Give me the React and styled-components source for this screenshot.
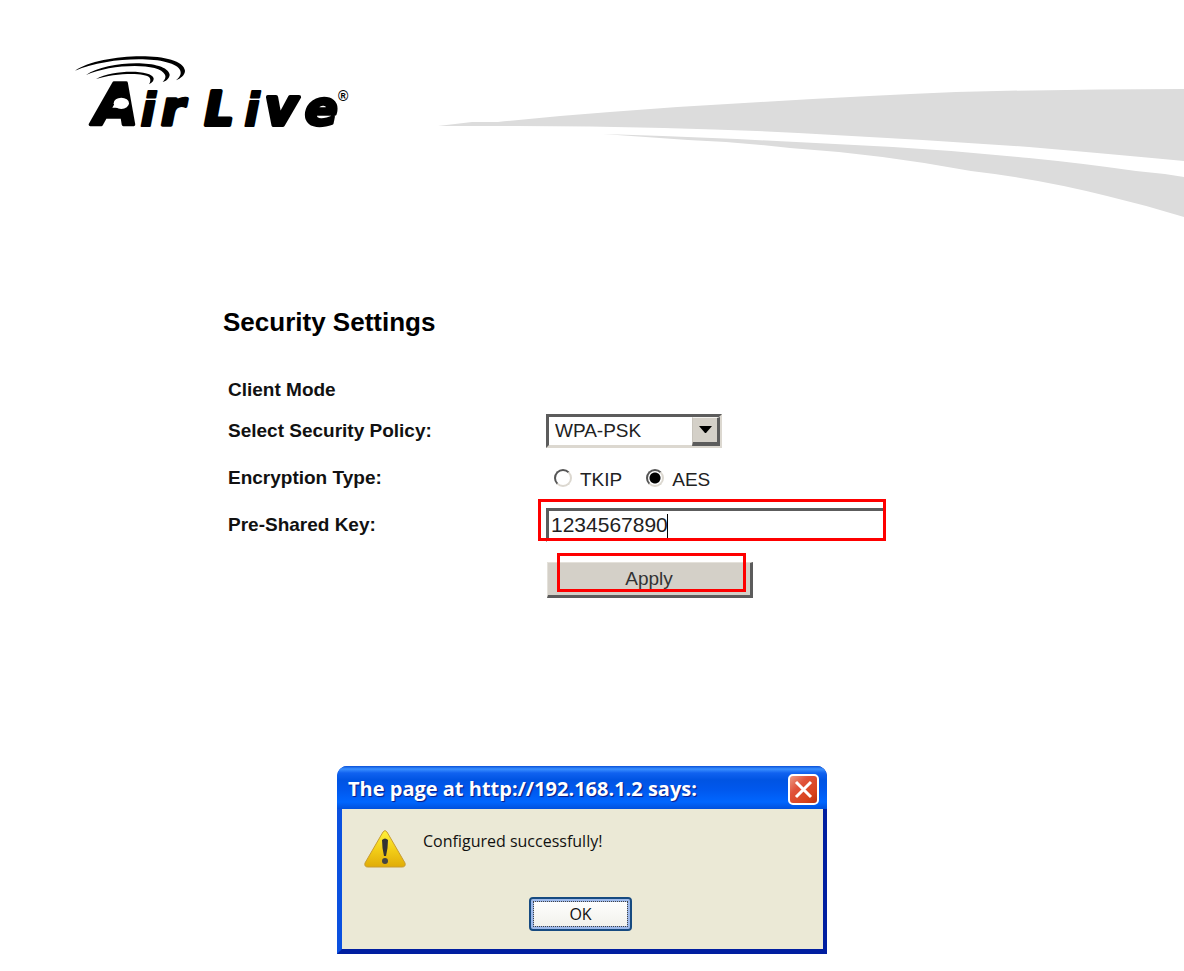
import React, { useState } from "react";
import styled, { createGlobalStyle } from "styled-components";

const GlobalStyle = createGlobalStyle`
  *, *::before, *::after { box-sizing: border-box; }
  body {
    margin: 0;
    background: #fff;
    color: #111;
    font-family: "Liberation Sans", Arial, sans-serif;
  }
`;

const Page = styled.div`
  display: flex;
  flex-direction: column;
  min-height: 100vh;
  overflow-x: hidden;
`;

const Header = styled.header`
  display: flex;
  align-items: flex-start;
  gap: 66px;
  padding: 40px 0 0 60px;
`;

const LogoArt = styled.svg`
  flex: none;
  width: 310px;
  height: 110px;
`;

const LogoWord = styled.text`
  font-family: "DejaVu Sans", sans-serif;
  font-weight: 700;
  font-style: italic;
  fill: #000;
  stroke: #000;
  stroke-linejoin: round;
  stroke-width: ${(p) => p.$weight}px;
  font-size: ${(p) => p.$size}px;
`;

const Mark = styled.text`
  font-family: "Liberation Sans", sans-serif;
  font-weight: 700;
  font-size: 42px;
`;

const Swoosh = styled.svg`
  flex: 1;
  min-width: 0;
  height: 130px;
  margin-top: 48px;
  fill: #dcdcdc;
`;

const Settings = styled.form`
  display: flex;
  flex-direction: column;
  align-items: flex-start;
  padding: 88px 24px 0 223px;
`;

const Title = styled.h1`
  margin: 0 0 38px;
  font-size: 26px;
  line-height: 32px;
  font-weight: 700;
  color: #000;
`;

const Rows = styled.div`
  display: grid;
  grid-template-columns: 318px auto;
  grid-template-rows: 47px 48px 46px;
  align-items: center;
  padding-left: 5px;
`;

const Subtitle = styled.h2`
  margin: 0 0 3px 5px;
  font-size: 19px;
  line-height: 28px;
  font-weight: 700;
`;

const Label = styled.label`
  font-size: 19px;
  line-height: 24px;
  font-weight: 700;
`;

const SelectBox = styled.div`
  position: relative;
  width: 176px;
  height: 34px;
`;

const Select = styled.select`
  appearance: none;
  width: 100%;
  height: 100%;
  padding: 0 28px 0 6px;
  border: 3px solid;
  border-color: #5c5c5c #dcd8d0 #dcd8d0 #5c5c5c;
  border-radius: 0;
  background: #fff;
  color: #222;
  font-family: inherit;
  font-size: 19px;
`;

const Arrow = styled.span`
  position: absolute;
  top: 3px;
  right: 2px;
  display: flex;
  align-items: center;
  justify-content: center;
  width: 28px;
  height: 29px;
  border: solid;
  border-width: 1px 3px 4px 1px;
  border-color: #f4f2ee #5c5c5c #5c5c5c #c8c4bc;
  background: #d4d0c8;
  pointer-events: none;
`;

const Options = styled.div`
  display: flex;
  align-items: center;
  gap: 24px;
  padding: 4px 0 0 8px;
`;

const Option = styled.label`
  display: flex;
  align-items: center;
  gap: 8px;
  font-size: 19px;
  line-height: 24px;
  color: #222;
`;

const Radio = styled.input`
  appearance: none;
  width: 18px;
  height: 18px;
  margin: 0 0 5px;
  border: 2px solid;
  border-color: #555 #dcd8d0 #dcd8d0 #555;
  border-radius: 50%;
  background: #fff;
  &:checked {
    background: radial-gradient(circle, #000 5px, #fff 6px);
  }
`;

const Marked = styled.div`
  position: relative;
  &::after {
    content: "";
    position: absolute;
    inset: ${(p) => p.$inset};
    border: 3px solid #fe0000;
    pointer-events: none;
  }
`;

const KeyInput = styled.input`
  display: block;
  width: 340px;
  height: 34px;
  padding: 0 2px;
  border: 3px solid;
  border-color: #5c5c5c #fff #fff #5c5c5c;
  border-radius: 0;
  outline: none;
  background: #fff;
  color: #222;
  font-family: inherit;
  font-size: 21px;
`;

const Caret = styled.span`
  position: absolute;
  top: 6px;
  left: 121px;
  width: 1px;
  height: 24px;
  background: #000;
`;

const ApplyButton = styled.button`
  width: 206px;
  height: 36px;
  padding: 0;
  border: solid;
  border-width: 1px 3px 3px 1px;
  border-color: #e4e1da #5c5c5c #5c5c5c #e4e1da;
  background: #d4d0c8;
  color: #333;
  font-family: inherit;
  font-size: 19px;
`;

const ApplySlot = styled.div`
  padding: 14px 0 0 324px;
`;

const Dialog = styled.section`
  width: 490px;
  max-width: 100%;
  margin: 168px 0 16px 337px;
  border: solid;
  border-width: 0 4px 5px 5px;
  border-color: #0831d9 #001ea0 #001ea0 #0a50e0;
  border-radius: 10px 10px 0 0;
  background: #0a50e0;
  font-family: "Open Sans", "Noto Sans", sans-serif;
`;

const TitleBar = styled.div`
  display: flex;
  align-items: center;
  justify-content: space-between;
  height: 43px;
  margin: 0 -4px 0 -5px;
  padding: 3px 8px 0 11px;
  border-radius: 10px 10px 0 0;
  background: linear-gradient(#0a50d8 0, #3a90ff 3px, #1062f0 7px, #0054e3 14px, #0058ee 24px, #0066ff 36px, #0050dc 43px);
`;

const DialogTitle = styled.h2`
  margin: 0;
  color: #fff;
  font-size: 20px;
  line-height: 24px;
  font-weight: 700;
  white-space: nowrap;
  text-shadow: 1px 1px 1px #0a1883;
`;

const CloseButton = styled.button`
  display: flex;
  align-items: center;
  justify-content: center;
  width: 31px;
  height: 31px;
  padding: 0;
  border: 2px solid #fff;
  border-radius: 5px;
  background: linear-gradient(135deg, #ec9a84, #e0523a 35%, #d8431c 75%, #b93010);
`;

const DialogBody = styled.div`
  display: flex;
  flex-direction: column;
  padding: 20px 26px 18px 22px;
  background: #ebe9d6;
`;

const Message = styled.div`
  display: flex;
  gap: 17px;
  height: 68px;
`;

const MessageText = styled.p`
  margin: 0;
  color: #111;
  font-size: 16px;
  line-height: 24px;
`;

const OkButton = styled.button`
  align-self: center;
  width: 103px;
  height: 34px;
  padding: 0;
  border: 2px solid #164a80;
  border-radius: 4px;
  outline: 1px dotted #444;
  outline-offset: -5px;
  background: linear-gradient(#fff, #f0f0ea);
  box-shadow: inset 0 0 0 3px #9db9ea;
  color: #111;
  font-family: inherit;
  font-size: 16px;
`;

function Logo() {
  return (
    <LogoArt viewBox="0 0 930 330" role="img" aria-label="Air Live">
      <path d="M45 92C120 38 368 30 375 92C375 105 362 115 348 121C361 110 364 101 361 92C345 46 150 46 45 92Z" />
      <path d="M78 105C140 60 322 56 329 104C328 115 320 122 308 126C316 118 318 110 315 104C298 66 150 72 78 105Z" />
      <path d="M108 117C160 88 275 88 281 115C282 123 276 128 267 133C272 125 272 118 269 113C255 95 160 100 108 117Z" />
      <LogoWord x="102" y="255" $size={172} $weight={10}>A</LogoWord>
      <ellipse cx="184" cy="190" rx="23" ry="17" fill="#fff" />
      <LogoWord x="241" y="257" $size={138} $weight={6}>i</LogoWord>
      <LogoWord x="303" y="255" $size={144} $weight={10}>r</LogoWord>
      <LogoWord x="434" y="255" $size={136} $weight={12}>L</LogoWord>
      <LogoWord x="552" y="257" $size={138} $weight={6}>i</LogoWord>
      <LogoWord x="614" y="255" $size={152} $weight={12}>v</LogoWord>
      <LogoWord x="734" y="255" $size={146} $weight={10}>e</LogoWord>
      <Mark x="834" y="183">®</Mark>
    </LogoArt>
  );
}

function WarningIcon() {
  return (
    <svg width="42" height="40" viewBox="0 0 42 40" aria-hidden="true">
      <defs>
        <linearGradient id="warn" x1="0" y1="0" x2="0" y2="1">
          <stop offset="0" stopColor="#fff23a" />
          <stop offset="0.55" stopColor="#f2cc16" />
          <stop offset="1" stopColor="#e0ac08" />
        </linearGradient>
      </defs>
      <path d="M19 3Q21 0 23 3L41 34Q42 38 38 38H4Q0 38 1 34Z" fill="url(#warn)" stroke="#c89c30" />
      <path d="M18 11Q21 8 24 11Q24 19 22 27H20Q18 19 18 11Z" fill="#333" />
      <circle cx="21" cy="32" r="3" fill="#444" />
    </svg>
  );
}

export default function App() {
  const [cipher, setCipher] = useState("AES");
  const [key, setKey] = useState("1234567890");

  return (
    <Page>
      <GlobalStyle />
      <Header>
        <Logo />
        <Swoosh viewBox="436 88 748 130" preserveAspectRatio="none" aria-hidden="true">
          <path d="M438 126L472 122H498Q555 116 610 112Q686 106 761 102Q860 96 956 92Q1070 89 1184 89V161Q1110 154 1029 147Q930 140 834 135Q750 130 664 128Q590 126 517 126Z" />
          <path d="M603 134Q670 136 737 139Q815 143 893 147Q961 151 1029 158Q1080 163 1136 171Q1160 173 1184 177V217Q1145 205 1107 196Q1040 179 971 171Q880 154 790 148Q740 142 688 140Z" />
        </Swoosh>
      </Header>

      <Settings onSubmit={(e) => e.preventDefault()}>
        <Title>Security Settings</Title>
        <Subtitle>Client Mode</Subtitle>
        <Rows>
          <Label htmlFor="policy">Select Security Policy:</Label>
          <SelectBox>
            <Select id="policy" defaultValue="WPA-PSK">
              <option>WPA-PSK</option>
            </Select>
            <Arrow>
              <svg width="13" height="7" viewBox="0 0 13 7" aria-hidden="true">
                <path d="M0 0H13L7 7H6Z" />
              </svg>
            </Arrow>
          </SelectBox>

          <Label as="span" id="encryption">Encryption Type:</Label>
          <Options role="radiogroup" aria-labelledby="encryption">
            {["TKIP", "AES"].map((name) => (
              <Option key={name}>
                <Radio
                  type="radio"
                  name="cipher"
                  checked={cipher === name}
                  onChange={() => setCipher(name)}
                />
                {name}
              </Option>
            ))}
          </Options>

          <Label htmlFor="psk">Pre-Shared Key:</Label>
          <Marked $inset="-9px 0 1px -8px">
            <KeyInput id="psk" type="text" value={key} onChange={(e) => setKey(e.target.value)} />
            <Caret />
          </Marked>
        </Rows>
        <ApplySlot>
          <Marked $inset="-9px 7px 6px 10px">
            <ApplyButton type="submit">Apply</ApplyButton>
          </Marked>
        </ApplySlot>
      </Settings>

      <Dialog role="alertdialog" aria-labelledby="alert-title">
        <TitleBar>
          <DialogTitle id="alert-title">The page at http://192.168.1.2 says:</DialogTitle>
          <CloseButton type="button" aria-label="Close">
            <svg width="19" height="19" viewBox="0 0 19 19" aria-hidden="true">
              <path d="M2 2L17 17M17 2L2 17" stroke="#fff" strokeWidth="3" />
            </svg>
          </CloseButton>
        </TitleBar>
        <DialogBody>
          <Message>
            <WarningIcon />
            <MessageText>Configured successfully!</MessageText>
          </Message>
          <OkButton type="button">OK</OkButton>
        </DialogBody>
      </Dialog>
    </Page>
  );
}
